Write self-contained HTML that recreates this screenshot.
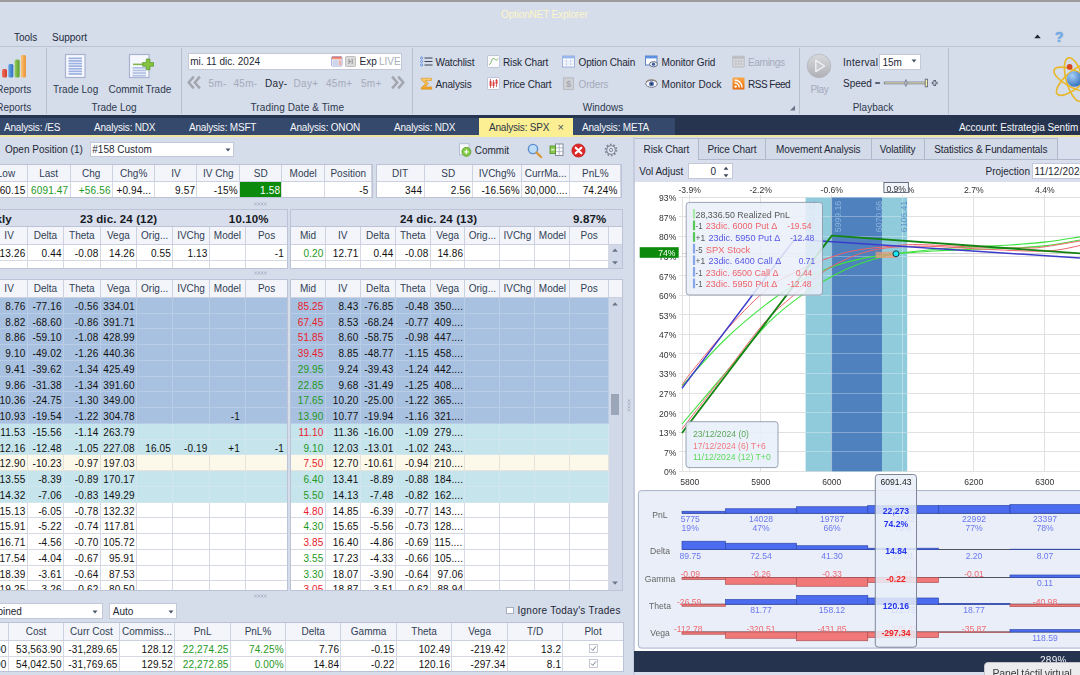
<!DOCTYPE html><html><head><meta charset="utf-8"><title>OptionNET Explorer</title><style>
*{box-sizing:border-box;margin:0;padding:0}
html,body{width:1080px;height:675px;overflow:hidden;background:#d5dcea;}
body{font-family:"Liberation Sans",sans-serif;font-size:10px;letter-spacing:0;color:#1e2b3c;position:relative}
.abs{position:absolute}
.t{position:absolute;white-space:nowrap;line-height:12px}
.grid{position:absolute;background:#fff;border:1px solid #bfc6d8;overflow:hidden}
.row{position:absolute;left:0;right:0;display:flex}
.c{height:100%;background:#fff;border-right:1px solid #d6d8e4;border-bottom:1px solid #d6d8e4;text-align:right;padding-right:1.3px;letter-spacing:.15px;white-space:nowrap;overflow:hidden;flex:none;color:#111}
.hd .c{background:#f3f5fa;text-align:center;padding:0;letter-spacing:0;color:#313e55;border-right:1px solid #ccd1df;border-bottom:1px solid #ccd1df}
.g{color:#1e981e}.r{color:#e8202c}
.blue .c{background:#a8c1e0;border-color:#b9cde6}
.cyan .c{background:#c5e4ec;border-color:#d2e6ee}
.cream .c{background:#fdf9ea;border-color:#e6e3dc}
.combo{position:absolute;background:#fff;border:1px solid #c3c9d8;}
svg text{letter-spacing:0}
.vsep{position:absolute;width:1px;background:#b8bfcf}
</style></head><body>
<div class="abs" style="left:0;top:0;width:1080px;height:2px;background:#9c9c9c"></div>
<div class="t" style="left:501px;top:8.7px;color:#fdf6c8;font-size:10px;letter-spacing:-.15px">OptionNET Explorer</div>
<div class="t" style="left:14px;top:32px">Tools</div>
<div class="t" style="left:52px;top:32px">Support</div>
<div class="abs" style="left:0;top:46px;width:1080px;height:1px;background:#bcc3d3"></div>
<div class="vsep" style="left:46px;top:48px;height:66px"></div>
<div class="vsep" style="left:181px;top:48px;height:66px"></div>
<div class="vsep" style="left:412px;top:48px;height:66px"></div>
<div class="vsep" style="left:799px;top:48px;height:66px"></div>
<div class="vsep" style="left:948px;top:48px;height:66px"></div>
<div class="t" style="left:-3.8px;top:101.6px;color:#2d3a4e">Reports</div>
<div class="t" style="left:54px;width:120px;text-align:center;top:101.6px;color:#2d3a4e">Trade Log</div>
<div class="t" style="left:237.3px;width:120px;text-align:center;top:101.6px;color:#2d3a4e"><span style="letter-spacing:.12px">Trading Date &amp; Time</span></div>
<div class="t" style="left:543px;width:120px;text-align:center;top:101.6px;color:#2d3a4e">Windows</div>
<div class="t" style="left:813px;width:120px;text-align:center;top:101.6px;color:#2d3a4e">Playback</div>
<svg class="abs" style="left:0;top:52px" width="30" height="28" viewBox="0 0 30 28"><defs><linearGradient id="gr" x1="0" x2="1"><stop offset="0" stop-color="#f07060"/><stop offset="1" stop-color="#d03828"/></linearGradient><linearGradient id="gb" x1="0" x2="1"><stop offset="0" stop-color="#6aa8e8"/><stop offset="1" stop-color="#2f6fc0"/></linearGradient><linearGradient id="gg" x1="0" x2="1"><stop offset="0" stop-color="#9ad060"/><stop offset="1" stop-color="#5a9a28"/></linearGradient><linearGradient id="go" x1="0" x2="1"><stop offset="0" stop-color="#fcc878"/><stop offset="1" stop-color="#e89030"/></linearGradient></defs><rect x="2" y="17" width="5" height="8.5" rx="1.5" fill="url(#gr)"/><rect x="8.3" y="12" width="5" height="13.5" rx="1.5" fill="url(#gb)"/><rect x="14.6" y="7.5" width="5" height="18" rx="1.5" fill="url(#gg)"/><rect x="20.9" y="3" width="5" height="22.5" rx="1.5" fill="url(#go)"/></svg>
<div class="t" style="left:-3.8px;top:83.8px;color:#2d3a4e">Reports</div>
<svg class="abs" style="left:64px;top:53px" width="24" height="27" viewBox="0 0 24 27"><rect x="1.5" y="1.5" width="19.5" height="23" fill="#f6f8fd" stroke="#aab2d2" stroke-width="1.2"/><rect x="4.5" y="4.5" width="13.5" height="1.7" fill="#9db2e2"/><rect x="4.5" y="7.1" width="13.5" height="1.7" fill="#9db2e2"/><rect x="4.5" y="9.7" width="13.5" height="1.7" fill="#9db2e2"/><rect x="4.5" y="12.3" width="13.5" height="1.7" fill="#9db2e2"/><rect x="4.5" y="14.9" width="13.5" height="1.7" fill="#9db2e2"/><rect x="4.5" y="17.5" width="13.5" height="1.7" fill="#9db2e2"/><rect x="4.5" y="20.1" width="13.5" height="1.7" fill="#9db2e2"/></svg>
<div class="t" style="left:53px;top:83.8px;color:#2d3a4e">Trade Log</div>
<svg class="abs" style="left:128px;top:53px" width="28" height="27" viewBox="0 0 28 27"><rect x="1.5" y="1.5" width="19.5" height="23" fill="#f6f8fd" stroke="#aab2d2" stroke-width="1.2"/><rect x="4.5" y="14.0" width="13.5" height="1.7" fill="#b2c0e4"/><rect x="4.5" y="16.6" width="13.5" height="1.7" fill="#b2c0e4"/><rect x="4.5" y="19.2" width="13.5" height="1.7" fill="#b2c0e4"/><rect x="4.5" y="21.8" width="13.5" height="1.7" fill="#b2c0e4"/><rect x="5" y="10.6" width="10" height="1.5" fill="#7db548"/><path d="M18.3 6h3.6v3.6h3.6v3.6h-3.6v3.6h-3.6v-3.6h-3.6v-3.6h3.6z" fill="#86c440" stroke="#5c9a28" stroke-width=".8"/></svg>
<div class="t" style="left:108.5px;top:83.8px;color:#2d3a4e">Commit Trade</div>
<div class="abs" style="left:188px;top:52.5px;width:213.5px;height:17px;background:#fff;border:1px solid #c3c9d8"></div>
<div class="t" style="left:190.2px;top:55.8px;color:#1e2836">mi. 11 dic. 2024</div>
<svg class="abs" style="left:331px;top:55.5px" width="12" height="11" viewBox="0 0 12 11"><defs><linearGradient id="cg" x1="0" y1="0" x2="0" y2="1"><stop offset="0" stop-color="#e86858"/><stop offset="1" stop-color="#f4a898"/></linearGradient></defs><rect x=".5" y=".5" width="10.6" height="9.6" rx="1" fill="#f4f6fc" stroke="#97a3cf" stroke-width=".8"/><path d="M.9 3.4V1.6q0-.8.8-.8h8.2q.8 0 .8.8v1.8z" fill="url(#cg)"/><rect x="1.6" y="4.2" width="6" height="5" fill="#cbd6ee"/><rect x="7.8" y="4.2" width="2.4" height="5" fill="#f0b0a8"/></svg>
<svg class="abs" style="left:345px;top:55.5px" width="11" height="11" viewBox="0 0 11 11"><rect x=".5" y=".5" width="10" height="10" rx=".8" fill="#dadada" stroke="#b6b6b8" stroke-width=".8"/><path d="M4 3v5M7.2 3v5M4 5.5h2" stroke="#8c8c8e" stroke-width=".9" fill="none"/></svg>
<div class="t" style="left:359.5px;top:55.8px;color:#1e2836">Exp</div>
<div class="t" style="left:379px;top:55.8px;color:#a8aebb">LIVE</div>
<svg class="abs" style="left:187px;top:75px" width="15" height="15" viewBox="0 0 14 14"><g fill="none" stroke="#a2a6ae" stroke-width="2.3"><path d="M6.3 1.5 1.6 7l4.7 5.5"/><path d="M12 1.5 7.3 7l4.7 5.5"/></g></svg>
<svg class="abs" style="left:389.5px;top:75px" width="15" height="15" viewBox="0 0 14 14"><g transform="translate(14,0) scale(-1,1)" fill="none" stroke="#a2a6ae" stroke-width="2.3"><path d="M6.3 1.5 1.6 7l4.7 5.5"/><path d="M12 1.5 7.3 7l4.7 5.5"/></g></svg>
<div class="t" style="left:208.5px;top:77.5px;letter-spacing:.3px;color:#a4abba">5m-</div>
<div class="t" style="left:233.5px;top:77.5px;letter-spacing:.3px;color:#a4abba">45m-</div>
<div class="t" style="left:265px;top:77.5px;letter-spacing:.3px;color:#1e2836">Day-</div>
<div class="t" style="left:293.5px;top:77.5px;letter-spacing:.3px;color:#a4abba">Day+</div>
<div class="t" style="left:326px;top:77.5px;letter-spacing:.3px;color:#a4abba">45m+</div>
<div class="t" style="left:361px;top:77.5px;letter-spacing:.3px;color:#a4abba">5m+</div>
<svg class="abs" style="left:420px;top:54.5px" width="13" height="13" viewBox="0 0 13 13"><g fill="none" stroke="#3c4454" stroke-width="1.2"><path d="M4.5 3h8M4.5 6.5h8M4.5 10h8"/></g><g fill="#fff" stroke="#4a80d8" stroke-width=".9"><circle cx="1.6" cy="3" r="1"/><circle cx="1.6" cy="6.5" r="1"/><circle cx="1.6" cy="10" r="1"/></g></svg>
<div class="t" style="left:435.5px;top:56.8px;letter-spacing:-0.15px;color:#1e2836">Watchlist</div>
<svg class="abs" style="left:420px;top:76.5px" width="13" height="13" viewBox="0 0 13 13"><defs><linearGradient id="sg" x1="0" y1="0" x2="0" y2="1"><stop offset="0" stop-color="#fcd070"/><stop offset="1" stop-color="#f0a020"/></linearGradient></defs><path d="M1.2 1.3h10.3v2.3H5.2l3.3 3-3.6 3.3h6.9v2.3H1.2v-1.5l4.4-4-4.4-3.9z" fill="url(#sg)" stroke="#d89020" stroke-width=".6" stroke-linejoin="round"/></svg>
<div class="t" style="left:435.5px;top:78.8px;letter-spacing:-0.15px;color:#1e2836">Analysis</div>
<svg class="abs" style="left:486.5px;top:54.5px" width="13" height="13" viewBox="0 0 13 13"><rect x=".5" y=".5" width="12" height="12" rx="1.2" fill="#fcfcfe" stroke="#b4bccf" stroke-width=".8"/><path d="M2 9.5c2.5 0 2.2-6 4.5-6s2 4 4.5 0" fill="none" stroke="#6cb058" stroke-width="1"/></svg>
<div class="t" style="left:503px;top:56.8px;letter-spacing:-0.15px;color:#1e2836">Risk Chart</div>
<svg class="abs" style="left:486.5px;top:76.5px" width="13" height="13" viewBox="0 0 13 13"><rect x=".5" y=".5" width="12" height="12" rx="1.2" fill="#fcfcfe" stroke="#b4bccf" stroke-width=".8"/><path d="M3.5 2v9M6.5 3v8M9.5 2v8" stroke="#c03030" stroke-width=".7"/><rect x="2.6" y="4" width="1.9" height="5" fill="#e04040"/><rect x="5.6" y="5" width="1.9" height="4" fill="#e04040"/><rect x="8.6" y="3" width="1.9" height="4" fill="#e04040"/></svg>
<div class="t" style="left:503px;top:78.8px;letter-spacing:-0.15px;color:#1e2836">Price Chart</div>
<svg class="abs" style="left:561.5px;top:54.5px" width="13" height="13" viewBox="0 0 13 13"><rect x=".5" y="1" width="12" height="11" fill="#fdfdff" stroke="#8aa4d8" stroke-width=".8"/><rect x=".5" y="1" width="12" height="2.4" fill="#98b6f0"/><path d="M.5 6.2h12M.5 9h12M4.5 3.6v8.4M8.5 3.6v8.4" stroke="#c2d0f0" stroke-width=".7"/></svg>
<div class="t" style="left:578.5px;top:56.8px;letter-spacing:-0.15px;color:#1e2836">Option Chain</div>
<svg class="abs" style="left:561.5px;top:76.5px" width="13" height="13" viewBox="0 0 13 13"><rect x="1.5" y=".8" width="10" height="11.6" fill="#cfd0d5" stroke="#b2b4ba" stroke-width=".8"/><text x="6.5" y="10" font-size="8.5" text-anchor="middle" fill="#a4a6ae" font-family="Liberation Sans" font-weight="bold">$</text></svg>
<div class="t" style="left:578.5px;top:78.8px;letter-spacing:-0.15px;color:#a4abba">Orders</div>
<svg class="abs" style="left:645px;top:54.5px" width="13" height="13" viewBox="0 0 13 13"><rect x=".5" y="1" width="11.5" height="9" fill="#fdfdff" stroke="#5078b8" stroke-width=".9"/><rect x=".5" y="1" width="11.5" height="2.4" fill="#5c90e0"/><ellipse cx="8.5" cy="9.2" rx="4" ry="2.6" fill="#eef2fa" stroke="#586078" stroke-width=".9"/><circle cx="8.5" cy="9.2" r="1.6" fill="#3c5ca0"/></svg>
<div class="t" style="left:661.5px;top:56.8px;letter-spacing:-0.1px;color:#1e2836">Monitor Grid</div>
<svg class="abs" style="left:645px;top:76.5px" width="13" height="13" viewBox="0 0 13 13"><ellipse cx="6.5" cy="6.8" rx="5.8" ry="3.5" fill="#f4f6fa" stroke="#6a6c78" stroke-width=".9"/><circle cx="6.5" cy="6.8" r="2.5" fill="#5878b8"/><circle cx="6.5" cy="6.8" r="1.1" fill="#202838"/><path d="M1 5c2-3 9-3 11 0" fill="none" stroke="#94806c" stroke-width="1"/></svg>
<div class="t" style="left:661.5px;top:78.8px;letter-spacing:0.1px;color:#1e2836">Monitor Dock</div>
<svg class="abs" style="left:731.5px;top:54.5px" width="13" height="13" viewBox="0 0 13 13"><rect x=".8" y="1.2" width="11.4" height="10.8" rx=".5" fill="#d6d7db" stroke="#b0b2b8" stroke-width=".8"/><rect x=".8" y="1.2" width="11.4" height="2.6" fill="#bcbec4"/><g fill="#b4b6bc"><rect x="3" y="5.5" width="1.6" height="1.4"/><rect x="5.7" y="5.5" width="1.6" height="1.4"/><rect x="8.4" y="5.5" width="1.6" height="1.4"/><rect x="3" y="8.3" width="1.6" height="1.4"/><rect x="5.7" y="8.3" width="1.6" height="1.4"/><rect x="8.4" y="8.3" width="1.6" height="1.4"/></g></svg>
<div class="t" style="left:748px;top:56.8px;letter-spacing:-0.35px;color:#a4abba">Earnings</div>
<svg class="abs" style="left:731.5px;top:76.5px" width="13" height="13" viewBox="0 0 13 13"><defs><linearGradient id="rs" x1="0" y1="0" x2="0" y2="1"><stop offset="0" stop-color="#fba848"/><stop offset="1" stop-color="#e86c10"/></linearGradient></defs><rect x=".5" y=".5" width="12" height="12" rx="1.1" fill="url(#rs)"/><circle cx="3.6" cy="9.6" r="1.2" fill="#fff"/><path d="M2.5 5.8a4.8 4.8 0 0 1 4.8 4.8M2.5 3a7.6 7.6 0 0 1 7.6 7.6" fill="none" stroke="#fff" stroke-width="1.4"/></svg>
<div class="t" style="left:748px;top:78.8px;letter-spacing:-0.5px;color:#1e2836">RSS Feed</div>
<svg class="abs" style="left:789px;top:105px" width="7" height="6" viewBox="0 0 7 6"><path d="M6 .5V5.5H1z" fill="#6a7488"/></svg>
<svg class="abs" style="left:806px;top:53px" width="26" height="26" viewBox="0 0 26 26"><defs><linearGradient id="pl" x1="0" y1="0" x2="0" y2="1"><stop offset="0" stop-color="#d8d9dc"/><stop offset="1" stop-color="#aeb0b6"/></linearGradient></defs><circle cx="13" cy="13" r="11.8" fill="url(#pl)" stroke="#b4b6bc" stroke-width=".8"/><path d="M9.8 7.4 18.6 13 9.8 18.6z" fill="#c6c8ce" stroke="#f1f1f4" stroke-width="1.4" stroke-linejoin="round"/></svg>
<div class="t" style="left:810.5px;top:84px;letter-spacing:-.4px;color:#a4abba">Play</div>
<div class="t" style="left:843px;top:56.8px;letter-spacing:.3px;color:#1e2836">Interval</div>
<div class="abs" style="left:878.5px;top:53.5px;width:42.5px;height:16px;background:#fff;border:1px solid #c3c9d8"></div>
<div class="t" style="left:882.5px;top:56.8px;color:#1e2836">15m</div>
<svg class="abs" style="left:911px;top:59px" width="6" height="4" viewBox="0 0 6 4"><path d="M.5.5h5L3 3.5z" fill="#4a5468"/></svg>
<div class="t" style="left:843px;top:77.6px;color:#1e2836">Speed</div>
<svg class="abs" style="left:873px;top:76px" width="68" height="14" viewBox="0 0 68 14"><rect x="2" y="6" width="5.2" height="1.9" rx=".9" fill="#5a6478"/><rect x="11.2" y="6" width="43" height="1.9" fill="#e6dfae" stroke="#69728a" stroke-width=".7"/><path d="M32.9 3.6l1.2 3.4-1.2 3.4-1.2-3.4z" fill="#dfe2ea" stroke="#5a6478" stroke-width=".7"/><rect x="52.2" y="3.2" width="2.4" height="7.6" fill="#fdf0a0" stroke="#5a6478" stroke-width=".8"/><path d="M58.8 7h5.8M61.7 4.1v5.8" stroke="#5a6478" stroke-width="2.5"/><path d="M59.8 7h3.8M61.7 5.1v3.8" stroke="#e8eaf0" stroke-width=".8"/></svg>
<svg class="abs" style="left:1033.5px;top:34px" width="7" height="5" viewBox="0 0 7 5"><path d="M3.5.5 6.8 4.2H.2z" fill="#1e2836"/></svg>
<div class="t" style="left:1055px;top:28.5px;color:#78aee8;font-size:14px;font-weight:bold;line-height:16px;text-shadow:0 0 1px #4a80c8">?</div>
<svg class="abs" style="left:1050px;top:54px" width="30" height="50" viewBox="0 0 30 50"><g fill="none" stroke="#e8b828" stroke-width="1.6"><ellipse cx="24.5" cy="25.5" rx="8.3" ry="22.5" transform="rotate(-16 24.5 25.5)"/><ellipse cx="24.5" cy="25.5" rx="8.3" ry="22.5" transform="rotate(50 24.5 25.5)"/><ellipse cx="24.5" cy="25.5" rx="8.3" ry="22.5" transform="rotate(-64 24.5 25.5)"/></g><defs><radialGradient id="sp" cx=".35" cy=".3" r=".8"><stop offset="0" stop-color="#a8d0f8"/><stop offset="1" stop-color="#2a68b8"/></radialGradient></defs><circle cx="24.5" cy="25" r="7.8" fill="url(#sp)"/><circle cx="19.6" cy="12.8" r="2.9" fill="#d84820"/></svg>
<div class="abs" style="left:0;top:115.3px;width:1080px;height:20.4px;background:#27344f"></div><div class="abs" style="left:0;top:117.8px;width:674.5px;height:17.9px;background:#34496b"></div>

<div class="abs" style="left:0;top:135.4px;width:1080px;height:1.6px;background:#efe49c"></div>
<div class="abs" style="left:478.8px;top:118px;width:94.4px;height:18.5px;background:#fcee92"></div>

<div class="t" style="left:4px;top:122px;letter-spacing:-.2px;color:#f4f6fa">Analysis: /ES</div>
<div class="t" style="left:94px;top:122px;letter-spacing:-.2px;color:#f4f6fa">Analysis: NDX</div>
<div class="t" style="left:189px;top:122px;letter-spacing:-.2px;color:#f4f6fa">Analysis: MSFT</div>
<div class="t" style="left:290px;top:122px;letter-spacing:-.2px;color:#f4f6fa">Analysis: ONON</div>
<div class="t" style="left:394px;top:122px;letter-spacing:-.2px;color:#f4f6fa">Analysis: NDX</div>
<div class="t" style="left:582px;top:122px;letter-spacing:-.2px;color:#f4f6fa">Analysis: META</div>
<div class="t" style="left:489px;top:122px;letter-spacing:-.2px;color:#2a3548">Analysis: SPX</div>
<div class="t" style="left:557.5px;top:121px;color:#4a5468;font-size:11px">×</div>
<div class="t" style="left:959px;top:122px;letter-spacing:-.05px;color:#f4f6fa">Account: Estrategia Sentim</div>
<div class="t" style="left:5px;top:144.1px;color:#1e2836">Open Position (1)</div>
<div class="combo" style="left:89.5px;top:142.1px;width:144.5px;height:15.4px"></div>
<div class="t" style="left:92.3px;top:144.1px;color:#1e2836">#158 Custom</div>
<svg class="abs" style="left:224.5px;top:148px" width="6" height="4" viewBox="0 0 6 4"><path d="M.5.5h5L3 3.5z" fill="#4a5468"/></svg>
<svg class="abs" style="left:458px;top:143px" width="14" height="14" viewBox="0 0 14 14"><rect x="1.5" y=".8" width="9.5" height="11" fill="#fdfdff" stroke="#aab4cc" stroke-width=".8"/><circle cx="8.4" cy="8.8" r="4.5" fill="#84c848" stroke="#58a028" stroke-width=".8"/><path d="M6.2 8.8h4.4M8.4 6.6v4.4" stroke="#f4fff0" stroke-width="1.3"/></svg>
<div class="t" style="left:474.7px;top:144.6px;color:#1e2836">Commit</div>
<svg class="abs" style="left:527px;top:142.5px" width="16" height="16" viewBox="0 0 16 16"><circle cx="6" cy="6" r="4.6" fill="#bcdcf8" stroke="#5a8cd0" stroke-width="1.4"/><path d="M9.5 9.5 14 14" stroke="#d89838" stroke-width="2.4" stroke-linecap="round"/></svg>
<svg class="abs" style="left:549px;top:143px" width="15" height="14" viewBox="0 0 15 14"><rect x="6.5" y="1" width="7.5" height="11.5" fill="#fdfdff" stroke="#7a8498" stroke-width=".9"/><path d="M10.2 1v11.5M6.5 4.8h7.5M6.5 8.6h7.5" stroke="#9aa4b8" stroke-width=".7"/><rect x="1" y="3" width="5.5" height="7.5" fill="#8cc850" stroke="#4a9020" stroke-width=".8"/><path d="M2.2 6.7h3.2" stroke="#fff" stroke-width="1.1"/></svg>
<svg class="abs" style="left:571px;top:142.5px" width="16" height="16" viewBox="0 0 16 16"><circle cx="7.5" cy="7.5" r="6.6" fill="#e02828" stroke="#b01010" stroke-width=".6"/><path d="M4.7 4.7l5.6 5.6M10.3 4.7l-5.6 5.6" stroke="#fff" stroke-width="2.2" stroke-linecap="round"/></svg>
<svg class="abs" style="left:604px;top:143px" width="14" height="14" viewBox="0 0 14 14"><circle cx="7" cy="7" r="4.3" fill="#e4e8f0" stroke="#7c8496" stroke-width="1.1"/><circle cx="7" cy="7" r="5.5" fill="none" stroke="#7c8496" stroke-width="1.6" stroke-dasharray="1.7 1.75"/><circle cx="7" cy="7" r="1.7" fill="#d5dcea" stroke="#7c8496" stroke-width=".9"/></svg>
<div class="grid" style="left:-15.80px;top:164.10px;width:388.30px;height:34.30px;background:#fff;border-color:#bcc3d6">
<div class="row hd" style="top:0.00px;height:17.40px;line-height:17.70px">
<div class="c" style="width:42.50px;">Low</div>
<div class="c" style="width:42.80px;">Last</div>
<div class="c" style="width:42.40px;">Chg</div>
<div class="c" style="width:42.60px;">Chg%</div>
<div class="c" style="width:42.00px;">IV</div>
<div class="c" style="width:42.50px;">IV Chg</div>
<div class="c" style="width:42.50px;">SD</div>
<div class="c" style="width:42.50px;">Model</div>
<div class="c" style="width:47.50px;">Position</div>
</div>
<div class="row " style="top:17.40px;height:15.90px;line-height:17.60px">
<div class="c" style="width:42.50px;">6060.15</div>
<div class="c" style="width:42.80px;color:#1e981e;">6091.47</div>
<div class="c" style="width:42.40px;color:#1e981e;">+56.56</div>
<div class="c" style="width:42.60px;text-align:left;padding-left:3.5px;">+0.94...</div>
<div class="c" style="width:42.00px;">9.57</div>
<div class="c" style="width:42.50px;">-15%</div>
<div class="c" style="width:42.50px;background:#0b8a0b;color:#fff;">1.58</div>
<div class="c" style="width:42.50px;"></div>
<div class="c" style="width:47.50px;padding-right:3px;">-5</div>
</div>
</div>
<div class="grid" style="left:375.50px;top:164.10px;width:246.00px;height:34.30px;background:#fff;border-color:#bcc3d6">
<div class="row hd" style="top:0.00px;height:17.40px;line-height:17.70px">
<div class="c" style="width:48.00px;">DIT</div>
<div class="c" style="width:48.60px;">SD</div>
<div class="c" style="width:48.90px;">IVChg%</div>
<div class="c" style="width:48.30px;">CurrMa...</div>
<div class="c" style="width:51.20px;">PnL%</div>
</div>
<div class="row " style="top:17.40px;height:15.90px;line-height:17.60px">
<div class="c" style="width:48.00px;">344</div>
<div class="c" style="width:48.60px;">2.56</div>
<div class="c" style="width:48.90px;">-16.56%</div>
<div class="c" style="width:48.30px;text-align:left;padding-left:2.5px;">30,000....</div>
<div class="c" style="width:51.20px;padding-right:3px;">74.24%</div>
</div>
</div>
<svg class="abs" style="left:253.7px;top:202px" width="13" height="4" viewBox="0 0 13 4"><path d="M.5.5l2.4 3M2.9.5.5 3.5M3.7.5l2.4 3M6.1.5 3.7 3.5M6.9.5l2.4 3M9.3.5 6.9 3.5M10.1.5l2.4 3M12.5.5 10.1 3.5" stroke="#a4abbe" stroke-width=".7" fill="none"/></svg>
<svg class="abs" style="left:253.7px;top:271.4px" width="13" height="4" viewBox="0 0 13 4"><path d="M.5.5l2.4 3M2.9.5.5 3.5M3.7.5l2.4 3M6.1.5 3.7 3.5M6.9.5l2.4 3M9.3.5 6.9 3.5M10.1.5l2.4 3M12.5.5 10.1 3.5" stroke="#a4abbe" stroke-width=".7" fill="none"/></svg>
<svg class="abs" style="left:253.7px;top:594px" width="13" height="4" viewBox="0 0 13 4"><path d="M.5.5l2.4 3M2.9.5.5 3.5M3.7.5l2.4 3M6.1.5 3.7 3.5M6.9.5l2.4 3M9.3.5 6.9 3.5M10.1.5l2.4 3M12.5.5 10.1 3.5" stroke="#a4abbe" stroke-width=".7" fill="none"/></svg>
<div class="abs" style="left:-5px;top:208.9px;width:293.1px;height:59.9px;background:#d8deeb;border:1px solid #bcc3d6"></div>
<div class="abs" style="left:290.1px;top:208.9px;width:332.8px;height:59.9px;background:#d8deeb;border:1px solid #bcc3d6"></div>
<div class="t" style="left:-4.6px;top:211.8px;font-weight:bold;font-size:11.5px;letter-spacing:.12px;color:#16191f;line-height:14px">kly</div>
<div class="t" style="left:68.5px;width:100px;text-align:center;top:211.8px;font-weight:bold;font-size:11.5px;letter-spacing:.12px;color:#16191f;line-height:14px">23 dic. 24 (12)</div>
<div class="t" style="left:168.6px;width:100px;text-align:right;top:211.8px;font-weight:bold;font-size:11.5px;letter-spacing:.12px;color:#16191f;line-height:14px">10.10%</div>
<div class="t" style="left:388.5px;width:100px;text-align:center;top:211.8px;font-weight:bold;font-size:11.5px;letter-spacing:.12px;color:#16191f;line-height:14px">24 dic. 24 (13)</div>
<div class="t" style="left:506.3px;width:100px;text-align:right;top:211.8px;font-weight:bold;font-size:11.5px;letter-spacing:.12px;color:#16191f;line-height:14px">9.87%</div>
<div class="grid" style="left:-9.50px;top:226.20px;width:297.60px;height:42.60px;background:#fff;border-color:#bcc3d6">
<div class="row hd" style="top:0.00px;height:17.70px;line-height:18.00px">
<div class="c" style="width:36.20px;">IV</div>
<div class="c" style="width:36.30px;">Delta</div>
<div class="c" style="width:36.70px;">Theta</div>
<div class="c" style="width:36.40px;">Vega</div>
<div class="c" style="width:36.20px;">Orig...</div>
<div class="c" style="width:36.60px;">IVChg</div>
<div class="c" style="width:36.20px;">Model</div>
<div class="c" style="width:42.00px;">Pos</div>
</div>
<div class="row " style="top:17.70px;height:16.20px;line-height:17.90px">
<div class="c" style="width:36.20px;">13.26</div>
<div class="c" style="width:36.30px;">0.44</div>
<div class="c" style="width:36.70px;">-0.08</div>
<div class="c" style="width:36.40px;">14.26</div>
<div class="c" style="width:36.20px;">0.55</div>
<div class="c" style="width:36.60px;">1.13</div>
<div class="c" style="width:36.20px;"></div>
<div class="c" style="width:42.00px;padding-right:3px;">-1</div>
</div>
<div class="row " style="top:33.90px;height:7.70px;line-height:9.40px">
<div class="c" style="width:36.20px;"></div>
<div class="c" style="width:36.30px;"></div>
<div class="c" style="width:36.70px;"></div>
<div class="c" style="width:36.40px;"></div>
<div class="c" style="width:36.20px;"></div>
<div class="c" style="width:36.60px;"></div>
<div class="c" style="width:36.20px;"></div>
<div class="c" style="width:42.00px;padding-right:3px;"></div>
</div>
</div>
<div class="grid" style="left:290.10px;top:226.20px;width:332.80px;height:42.60px;background:#d1d8e7;border-color:#bcc3d6">
<div class="row hd" style="top:0.00px;height:17.70px;line-height:18.00px">
<div class="c" style="width:34.70px;">Mid</div>
<div class="c" style="width:35.00px;">IV</div>
<div class="c" style="width:35.00px;">Delta</div>
<div class="c" style="width:35.00px;">Theta</div>
<div class="c" style="width:34.70px;">Vega</div>
<div class="c" style="width:34.80px;">Orig...</div>
<div class="c" style="width:35.20px;">IVChg</div>
<div class="c" style="width:35.00px;">Model</div>
<div class="c" style="width:38.30px;">Pos</div>
<div class="c" style="width:0.00px;width:13.7px;border-right:none"></div>
</div>
<div class="row " style="top:17.70px;height:16.20px;line-height:17.90px">
<div class="c" style="width:34.70px;color:#1e981e;">0.20</div>
<div class="c" style="width:35.00px;">12.71</div>
<div class="c" style="width:35.00px;">0.44</div>
<div class="c" style="width:35.00px;">-0.08</div>
<div class="c" style="width:34.70px;">14.86</div>
<div class="c" style="width:34.80px;"></div>
<div class="c" style="width:35.20px;"></div>
<div class="c" style="width:35.00px;"></div>
<div class="c" style="width:38.30px;"></div>
</div>
<div class="row " style="top:33.90px;height:7.70px;line-height:9.40px">
<div class="c" style="width:34.70px;"></div>
<div class="c" style="width:35.00px;"></div>
<div class="c" style="width:35.00px;"></div>
<div class="c" style="width:35.00px;"></div>
<div class="c" style="width:34.70px;"></div>
<div class="c" style="width:34.80px;"></div>
<div class="c" style="width:35.20px;"></div>
<div class="c" style="width:35.00px;"></div>
<div class="c" style="width:38.30px;"></div>
</div>
</div>
<svg class="abs" style="left:611px;top:247px" width="8" height="19" viewBox="0 0 8 19"><path d="M4 1.5 6.8 4.8H1.2zM4 17.5 6.8 14.2H1.2z" fill="#6a7488"/></svg>
<div class="grid" style="left:-9.50px;top:278.90px;width:297.60px;height:311.90px;background:#fff;border-color:#bcc3d6">
<div class="row hd" style="top:0.00px;height:17.95px;line-height:18.25px">
<div class="c" style="width:36.20px;">IV</div>
<div class="c" style="width:36.30px;">Delta</div>
<div class="c" style="width:36.70px;">Theta</div>
<div class="c" style="width:36.40px;">Vega</div>
<div class="c" style="width:36.20px;">Orig...</div>
<div class="c" style="width:36.60px;">IVChg</div>
<div class="c" style="width:36.20px;">Model</div>
<div class="c" style="width:42.00px;">Pos</div>
</div>
<div class="row blue" style="top:17.95px;height:15.75px;line-height:17.45px">
<div class="c" style="width:36.20px;">8.76</div>
<div class="c" style="width:36.30px;">-77.16</div>
<div class="c" style="width:36.70px;">-0.56</div>
<div class="c" style="width:36.40px;">334.01</div>
<div class="c" style="width:36.20px;"></div>
<div class="c" style="width:36.60px;"></div>
<div class="c" style="width:36.20px;"></div>
<div class="c" style="width:42.00px;padding-right:3px;"></div>
</div>
<div class="row blue" style="top:33.70px;height:15.75px;line-height:17.45px">
<div class="c" style="width:36.20px;">8.82</div>
<div class="c" style="width:36.30px;">-68.60</div>
<div class="c" style="width:36.70px;">-0.86</div>
<div class="c" style="width:36.40px;">391.71</div>
<div class="c" style="width:36.20px;"></div>
<div class="c" style="width:36.60px;"></div>
<div class="c" style="width:36.20px;"></div>
<div class="c" style="width:42.00px;padding-right:3px;"></div>
</div>
<div class="row blue" style="top:49.45px;height:15.75px;line-height:17.45px">
<div class="c" style="width:36.20px;">8.86</div>
<div class="c" style="width:36.30px;">-59.10</div>
<div class="c" style="width:36.70px;">-1.08</div>
<div class="c" style="width:36.40px;">428.99</div>
<div class="c" style="width:36.20px;"></div>
<div class="c" style="width:36.60px;"></div>
<div class="c" style="width:36.20px;"></div>
<div class="c" style="width:42.00px;padding-right:3px;"></div>
</div>
<div class="row blue" style="top:65.20px;height:15.75px;line-height:17.45px">
<div class="c" style="width:36.20px;">9.10</div>
<div class="c" style="width:36.30px;">-49.02</div>
<div class="c" style="width:36.70px;">-1.26</div>
<div class="c" style="width:36.40px;">440.36</div>
<div class="c" style="width:36.20px;"></div>
<div class="c" style="width:36.60px;"></div>
<div class="c" style="width:36.20px;"></div>
<div class="c" style="width:42.00px;padding-right:3px;"></div>
</div>
<div class="row blue" style="top:80.95px;height:15.75px;line-height:17.45px">
<div class="c" style="width:36.20px;">9.41</div>
<div class="c" style="width:36.30px;">-39.62</div>
<div class="c" style="width:36.70px;">-1.34</div>
<div class="c" style="width:36.40px;">425.49</div>
<div class="c" style="width:36.20px;"></div>
<div class="c" style="width:36.60px;"></div>
<div class="c" style="width:36.20px;"></div>
<div class="c" style="width:42.00px;padding-right:3px;"></div>
</div>
<div class="row blue" style="top:96.70px;height:15.75px;line-height:17.45px">
<div class="c" style="width:36.20px;">9.86</div>
<div class="c" style="width:36.30px;">-31.38</div>
<div class="c" style="width:36.70px;">-1.34</div>
<div class="c" style="width:36.40px;">391.60</div>
<div class="c" style="width:36.20px;"></div>
<div class="c" style="width:36.60px;"></div>
<div class="c" style="width:36.20px;"></div>
<div class="c" style="width:42.00px;padding-right:3px;"></div>
</div>
<div class="row blue" style="top:112.45px;height:15.75px;line-height:17.45px">
<div class="c" style="width:36.20px;">10.36</div>
<div class="c" style="width:36.30px;">-24.75</div>
<div class="c" style="width:36.70px;">-1.30</div>
<div class="c" style="width:36.40px;">349.00</div>
<div class="c" style="width:36.20px;"></div>
<div class="c" style="width:36.60px;"></div>
<div class="c" style="width:36.20px;"></div>
<div class="c" style="width:42.00px;padding-right:3px;"></div>
</div>
<div class="row blue" style="top:128.20px;height:15.75px;line-height:17.45px">
<div class="c" style="width:36.20px;">10.93</div>
<div class="c" style="width:36.30px;">-19.54</div>
<div class="c" style="width:36.70px;">-1.22</div>
<div class="c" style="width:36.40px;">304.78</div>
<div class="c" style="width:36.20px;"></div>
<div class="c" style="width:36.60px;"></div>
<div class="c" style="width:36.20px;padding-right:5px;">-1</div>
<div class="c" style="width:42.00px;padding-right:3px;"></div>
</div>
<div class="row cyan" style="top:143.95px;height:15.75px;line-height:17.45px">
<div class="c" style="width:36.20px;">11.53</div>
<div class="c" style="width:36.30px;">-15.56</div>
<div class="c" style="width:36.70px;">-1.14</div>
<div class="c" style="width:36.40px;">263.79</div>
<div class="c" style="width:36.20px;"></div>
<div class="c" style="width:36.60px;"></div>
<div class="c" style="width:36.20px;"></div>
<div class="c" style="width:42.00px;padding-right:3px;"></div>
</div>
<div class="row cyan" style="top:159.70px;height:15.75px;line-height:17.45px">
<div class="c" style="width:36.20px;">12.16</div>
<div class="c" style="width:36.30px;">-12.48</div>
<div class="c" style="width:36.70px;">-1.05</div>
<div class="c" style="width:36.40px;">227.08</div>
<div class="c" style="width:36.20px;">16.05</div>
<div class="c" style="width:36.60px;">-0.19</div>
<div class="c" style="width:36.20px;padding-right:5px;">+1</div>
<div class="c" style="width:42.00px;padding-right:3px;">-1</div>
</div>
<div class="row cream" style="top:175.45px;height:15.75px;line-height:17.45px">
<div class="c" style="width:36.20px;">12.90</div>
<div class="c" style="width:36.30px;">-10.23</div>
<div class="c" style="width:36.70px;">-0.97</div>
<div class="c" style="width:36.40px;">197.03</div>
<div class="c" style="width:36.20px;"></div>
<div class="c" style="width:36.60px;"></div>
<div class="c" style="width:36.20px;"></div>
<div class="c" style="width:42.00px;padding-right:3px;"></div>
</div>
<div class="row cyan" style="top:191.20px;height:15.75px;line-height:17.45px">
<div class="c" style="width:36.20px;">13.55</div>
<div class="c" style="width:36.30px;">-8.39</div>
<div class="c" style="width:36.70px;">-0.89</div>
<div class="c" style="width:36.40px;">170.17</div>
<div class="c" style="width:36.20px;"></div>
<div class="c" style="width:36.60px;"></div>
<div class="c" style="width:36.20px;"></div>
<div class="c" style="width:42.00px;padding-right:3px;"></div>
</div>
<div class="row cyan" style="top:206.95px;height:15.75px;line-height:17.45px">
<div class="c" style="width:36.20px;">14.32</div>
<div class="c" style="width:36.30px;">-7.06</div>
<div class="c" style="width:36.70px;">-0.83</div>
<div class="c" style="width:36.40px;">149.29</div>
<div class="c" style="width:36.20px;"></div>
<div class="c" style="width:36.60px;"></div>
<div class="c" style="width:36.20px;"></div>
<div class="c" style="width:42.00px;padding-right:3px;"></div>
</div>
<div class="row " style="top:222.70px;height:15.75px;line-height:17.45px">
<div class="c" style="width:36.20px;">15.13</div>
<div class="c" style="width:36.30px;">-6.05</div>
<div class="c" style="width:36.70px;">-0.78</div>
<div class="c" style="width:36.40px;">132.32</div>
<div class="c" style="width:36.20px;"></div>
<div class="c" style="width:36.60px;"></div>
<div class="c" style="width:36.20px;"></div>
<div class="c" style="width:42.00px;padding-right:3px;"></div>
</div>
<div class="row " style="top:238.45px;height:15.75px;line-height:17.45px">
<div class="c" style="width:36.20px;">15.91</div>
<div class="c" style="width:36.30px;">-5.22</div>
<div class="c" style="width:36.70px;">-0.74</div>
<div class="c" style="width:36.40px;">117.81</div>
<div class="c" style="width:36.20px;"></div>
<div class="c" style="width:36.60px;"></div>
<div class="c" style="width:36.20px;"></div>
<div class="c" style="width:42.00px;padding-right:3px;"></div>
</div>
<div class="row " style="top:254.20px;height:15.75px;line-height:17.45px">
<div class="c" style="width:36.20px;">16.71</div>
<div class="c" style="width:36.30px;">-4.56</div>
<div class="c" style="width:36.70px;">-0.70</div>
<div class="c" style="width:36.40px;">105.72</div>
<div class="c" style="width:36.20px;"></div>
<div class="c" style="width:36.60px;"></div>
<div class="c" style="width:36.20px;"></div>
<div class="c" style="width:42.00px;padding-right:3px;"></div>
</div>
<div class="row " style="top:269.95px;height:15.75px;line-height:17.45px">
<div class="c" style="width:36.20px;">17.54</div>
<div class="c" style="width:36.30px;">-4.04</div>
<div class="c" style="width:36.70px;">-0.67</div>
<div class="c" style="width:36.40px;">95.91</div>
<div class="c" style="width:36.20px;"></div>
<div class="c" style="width:36.60px;"></div>
<div class="c" style="width:36.20px;"></div>
<div class="c" style="width:42.00px;padding-right:3px;"></div>
</div>
<div class="row " style="top:285.70px;height:15.75px;line-height:17.45px">
<div class="c" style="width:36.20px;">18.39</div>
<div class="c" style="width:36.30px;">-3.61</div>
<div class="c" style="width:36.70px;">-0.64</div>
<div class="c" style="width:36.40px;">87.53</div>
<div class="c" style="width:36.20px;"></div>
<div class="c" style="width:36.60px;"></div>
<div class="c" style="width:36.20px;"></div>
<div class="c" style="width:42.00px;padding-right:3px;"></div>
</div>
<div class="row " style="top:301.45px;height:9.45px;line-height:17.45px">
<div class="c" style="width:36.20px;">19.25</div>
<div class="c" style="width:36.30px;">-3.26</div>
<div class="c" style="width:36.70px;">-0.62</div>
<div class="c" style="width:36.40px;">80.50</div>
<div class="c" style="width:36.20px;"></div>
<div class="c" style="width:36.60px;"></div>
<div class="c" style="width:36.20px;"></div>
<div class="c" style="width:42.00px;padding-right:3px;"></div>
</div>
</div>
<div class="grid" style="left:290.10px;top:278.90px;width:332.80px;height:311.90px;background:#d1d8e7;border-color:#bcc3d6">
<div class="row hd" style="top:0.00px;height:17.95px;line-height:18.25px">
<div class="c" style="width:34.70px;">Mid</div>
<div class="c" style="width:35.00px;">IV</div>
<div class="c" style="width:35.00px;">Delta</div>
<div class="c" style="width:35.00px;">Theta</div>
<div class="c" style="width:34.70px;">Vega</div>
<div class="c" style="width:34.80px;">Orig...</div>
<div class="c" style="width:35.20px;">IVChg</div>
<div class="c" style="width:35.00px;">Model</div>
<div class="c" style="width:38.30px;">Pos</div>
<div class="c" style="width:0.00px;width:13.7px;border-right:none"></div>
</div>
<div class="row blue" style="top:17.95px;height:15.75px;line-height:17.45px">
<div class="c" style="width:34.70px;color:#e8202c;">85.25</div>
<div class="c" style="width:35.00px;">8.43</div>
<div class="c" style="width:35.00px;">-76.85</div>
<div class="c" style="width:35.00px;">-0.48</div>
<div class="c" style="width:34.70px;text-align:left;padding-left:3.5px;">350....</div>
<div class="c" style="width:34.80px;"></div>
<div class="c" style="width:35.20px;"></div>
<div class="c" style="width:35.00px;"></div>
<div class="c" style="width:38.30px;"></div>
</div>
<div class="row blue" style="top:33.70px;height:15.75px;line-height:17.45px">
<div class="c" style="width:34.70px;color:#e8202c;">67.45</div>
<div class="c" style="width:35.00px;">8.53</div>
<div class="c" style="width:35.00px;">-68.24</div>
<div class="c" style="width:35.00px;">-0.77</div>
<div class="c" style="width:34.70px;text-align:left;padding-left:3.5px;">409....</div>
<div class="c" style="width:34.80px;"></div>
<div class="c" style="width:35.20px;"></div>
<div class="c" style="width:35.00px;"></div>
<div class="c" style="width:38.30px;"></div>
</div>
<div class="row blue" style="top:49.45px;height:15.75px;line-height:17.45px">
<div class="c" style="width:34.70px;color:#e8202c;">51.85</div>
<div class="c" style="width:35.00px;">8.60</div>
<div class="c" style="width:35.00px;">-58.75</div>
<div class="c" style="width:35.00px;">-0.98</div>
<div class="c" style="width:34.70px;text-align:left;padding-left:3.5px;">447....</div>
<div class="c" style="width:34.80px;"></div>
<div class="c" style="width:35.20px;"></div>
<div class="c" style="width:35.00px;"></div>
<div class="c" style="width:38.30px;"></div>
</div>
<div class="row blue" style="top:65.20px;height:15.75px;line-height:17.45px">
<div class="c" style="width:34.70px;color:#e8202c;">39.45</div>
<div class="c" style="width:35.00px;">8.85</div>
<div class="c" style="width:35.00px;">-48.77</div>
<div class="c" style="width:35.00px;">-1.15</div>
<div class="c" style="width:34.70px;text-align:left;padding-left:3.5px;">458....</div>
<div class="c" style="width:34.80px;"></div>
<div class="c" style="width:35.20px;"></div>
<div class="c" style="width:35.00px;"></div>
<div class="c" style="width:38.30px;"></div>
</div>
<div class="row blue" style="top:80.95px;height:15.75px;line-height:17.45px">
<div class="c" style="width:34.70px;color:#1e981e;">29.95</div>
<div class="c" style="width:35.00px;">9.24</div>
<div class="c" style="width:35.00px;">-39.43</div>
<div class="c" style="width:35.00px;">-1.24</div>
<div class="c" style="width:34.70px;text-align:left;padding-left:3.5px;">442....</div>
<div class="c" style="width:34.80px;"></div>
<div class="c" style="width:35.20px;"></div>
<div class="c" style="width:35.00px;"></div>
<div class="c" style="width:38.30px;"></div>
</div>
<div class="row blue" style="top:96.70px;height:15.75px;line-height:17.45px">
<div class="c" style="width:34.70px;color:#1e981e;">22.85</div>
<div class="c" style="width:35.00px;">9.68</div>
<div class="c" style="width:35.00px;">-31.49</div>
<div class="c" style="width:35.00px;">-1.25</div>
<div class="c" style="width:34.70px;text-align:left;padding-left:3.5px;">408....</div>
<div class="c" style="width:34.80px;"></div>
<div class="c" style="width:35.20px;"></div>
<div class="c" style="width:35.00px;"></div>
<div class="c" style="width:38.30px;"></div>
</div>
<div class="row blue" style="top:112.45px;height:15.75px;line-height:17.45px">
<div class="c" style="width:34.70px;color:#1e981e;">17.65</div>
<div class="c" style="width:35.00px;">10.20</div>
<div class="c" style="width:35.00px;">-25.00</div>
<div class="c" style="width:35.00px;">-1.22</div>
<div class="c" style="width:34.70px;text-align:left;padding-left:3.5px;">365....</div>
<div class="c" style="width:34.80px;"></div>
<div class="c" style="width:35.20px;"></div>
<div class="c" style="width:35.00px;"></div>
<div class="c" style="width:38.30px;"></div>
</div>
<div class="row blue" style="top:128.20px;height:15.75px;line-height:17.45px">
<div class="c" style="width:34.70px;color:#1e981e;">13.90</div>
<div class="c" style="width:35.00px;">10.77</div>
<div class="c" style="width:35.00px;">-19.94</div>
<div class="c" style="width:35.00px;">-1.16</div>
<div class="c" style="width:34.70px;text-align:left;padding-left:3.5px;">321....</div>
<div class="c" style="width:34.80px;"></div>
<div class="c" style="width:35.20px;"></div>
<div class="c" style="width:35.00px;"></div>
<div class="c" style="width:38.30px;"></div>
</div>
<div class="row cyan" style="top:143.95px;height:15.75px;line-height:17.45px">
<div class="c" style="width:34.70px;color:#e8202c;">11.10</div>
<div class="c" style="width:35.00px;">11.36</div>
<div class="c" style="width:35.00px;">-16.00</div>
<div class="c" style="width:35.00px;">-1.09</div>
<div class="c" style="width:34.70px;text-align:left;padding-left:3.5px;">279....</div>
<div class="c" style="width:34.80px;"></div>
<div class="c" style="width:35.20px;"></div>
<div class="c" style="width:35.00px;"></div>
<div class="c" style="width:38.30px;"></div>
</div>
<div class="row cyan" style="top:159.70px;height:15.75px;line-height:17.45px">
<div class="c" style="width:34.70px;color:#1e981e;">9.10</div>
<div class="c" style="width:35.00px;">12.03</div>
<div class="c" style="width:35.00px;">-13.01</div>
<div class="c" style="width:35.00px;">-1.02</div>
<div class="c" style="width:34.70px;text-align:left;padding-left:3.5px;">243....</div>
<div class="c" style="width:34.80px;"></div>
<div class="c" style="width:35.20px;"></div>
<div class="c" style="width:35.00px;"></div>
<div class="c" style="width:38.30px;"></div>
</div>
<div class="row cream" style="top:175.45px;height:15.75px;line-height:17.45px">
<div class="c" style="width:34.70px;color:#e8202c;">7.50</div>
<div class="c" style="width:35.00px;">12.70</div>
<div class="c" style="width:35.00px;">-10.61</div>
<div class="c" style="width:35.00px;">-0.94</div>
<div class="c" style="width:34.70px;text-align:left;padding-left:3.5px;">210....</div>
<div class="c" style="width:34.80px;"></div>
<div class="c" style="width:35.20px;"></div>
<div class="c" style="width:35.00px;"></div>
<div class="c" style="width:38.30px;"></div>
</div>
<div class="row cyan" style="top:191.20px;height:15.75px;line-height:17.45px">
<div class="c" style="width:34.70px;color:#1e981e;">6.40</div>
<div class="c" style="width:35.00px;">13.41</div>
<div class="c" style="width:35.00px;">-8.89</div>
<div class="c" style="width:35.00px;">-0.88</div>
<div class="c" style="width:34.70px;text-align:left;padding-left:3.5px;">184....</div>
<div class="c" style="width:34.80px;"></div>
<div class="c" style="width:35.20px;"></div>
<div class="c" style="width:35.00px;"></div>
<div class="c" style="width:38.30px;"></div>
</div>
<div class="row cyan" style="top:206.95px;height:15.75px;line-height:17.45px">
<div class="c" style="width:34.70px;color:#1e981e;">5.50</div>
<div class="c" style="width:35.00px;">14.13</div>
<div class="c" style="width:35.00px;">-7.48</div>
<div class="c" style="width:35.00px;">-0.82</div>
<div class="c" style="width:34.70px;text-align:left;padding-left:3.5px;">162....</div>
<div class="c" style="width:34.80px;"></div>
<div class="c" style="width:35.20px;"></div>
<div class="c" style="width:35.00px;"></div>
<div class="c" style="width:38.30px;"></div>
</div>
<div class="row " style="top:222.70px;height:15.75px;line-height:17.45px">
<div class="c" style="width:34.70px;color:#e8202c;">4.80</div>
<div class="c" style="width:35.00px;">14.85</div>
<div class="c" style="width:35.00px;">-6.39</div>
<div class="c" style="width:35.00px;">-0.77</div>
<div class="c" style="width:34.70px;text-align:left;padding-left:3.5px;">143....</div>
<div class="c" style="width:34.80px;"></div>
<div class="c" style="width:35.20px;"></div>
<div class="c" style="width:35.00px;"></div>
<div class="c" style="width:38.30px;"></div>
</div>
<div class="row " style="top:238.45px;height:15.75px;line-height:17.45px">
<div class="c" style="width:34.70px;color:#1e981e;">4.30</div>
<div class="c" style="width:35.00px;">15.65</div>
<div class="c" style="width:35.00px;">-5.56</div>
<div class="c" style="width:35.00px;">-0.73</div>
<div class="c" style="width:34.70px;text-align:left;padding-left:3.5px;">128....</div>
<div class="c" style="width:34.80px;"></div>
<div class="c" style="width:35.20px;"></div>
<div class="c" style="width:35.00px;"></div>
<div class="c" style="width:38.30px;"></div>
</div>
<div class="row " style="top:254.20px;height:15.75px;line-height:17.45px">
<div class="c" style="width:34.70px;color:#e8202c;">3.85</div>
<div class="c" style="width:35.00px;">16.40</div>
<div class="c" style="width:35.00px;">-4.86</div>
<div class="c" style="width:35.00px;">-0.69</div>
<div class="c" style="width:34.70px;text-align:left;padding-left:3.5px;">115....</div>
<div class="c" style="width:34.80px;"></div>
<div class="c" style="width:35.20px;"></div>
<div class="c" style="width:35.00px;"></div>
<div class="c" style="width:38.30px;"></div>
</div>
<div class="row " style="top:269.95px;height:15.75px;line-height:17.45px">
<div class="c" style="width:34.70px;color:#1e981e;">3.55</div>
<div class="c" style="width:35.00px;">17.23</div>
<div class="c" style="width:35.00px;">-4.33</div>
<div class="c" style="width:35.00px;">-0.66</div>
<div class="c" style="width:34.70px;text-align:left;padding-left:3.5px;">105....</div>
<div class="c" style="width:34.80px;"></div>
<div class="c" style="width:35.20px;"></div>
<div class="c" style="width:35.00px;"></div>
<div class="c" style="width:38.30px;"></div>
</div>
<div class="row " style="top:285.70px;height:15.75px;line-height:17.45px">
<div class="c" style="width:34.70px;color:#1e981e;">3.30</div>
<div class="c" style="width:35.00px;">18.07</div>
<div class="c" style="width:35.00px;">-3.90</div>
<div class="c" style="width:35.00px;">-0.64</div>
<div class="c" style="width:34.70px;">97.06</div>
<div class="c" style="width:34.80px;"></div>
<div class="c" style="width:35.20px;"></div>
<div class="c" style="width:35.00px;"></div>
<div class="c" style="width:38.30px;"></div>
</div>
<div class="row " style="top:301.45px;height:9.45px;line-height:17.45px">
<div class="c" style="width:34.70px;color:#e8202c;">3.05</div>
<div class="c" style="width:35.00px;">18.87</div>
<div class="c" style="width:35.00px;">-3.51</div>
<div class="c" style="width:35.00px;">-0.62</div>
<div class="c" style="width:34.70px;">88.94</div>
<div class="c" style="width:34.80px;"></div>
<div class="c" style="width:35.20px;"></div>
<div class="c" style="width:35.00px;"></div>
<div class="c" style="width:38.30px;"></div>
</div>
</div>
<div class="abs" style="left:610.5px;top:393.9px;width:8.8px;height:21px;background:#9ba7b9"></div>
<svg class="abs" style="left:611px;top:301px" width="8" height="6" viewBox="0 0 8 6"><path d="M4 1.2 6.8 4.5H1.2z" fill="#6a7488"/></svg>
<svg class="abs" style="left:611px;top:580px" width="8" height="6" viewBox="0 0 8 6"><path d="M4 4.8 6.8 1.5H1.2z" fill="#6a7488"/></svg>
<svg class="abs" style="left:626.7px;top:399.4px" width="4" height="13" viewBox="0 0 4 13"><path d="M.5.5l3 2.4M.5 2.9l3-2.4M.5 3.7l3 2.4M.5 6.1l3-2.4M.5 6.9l3 2.4M.5 9.3l3-2.4M.5 10.1l3 2.4M.5 12.5l3-2.4" stroke="#a4abbe" stroke-width=".7" fill="none"/></svg>
<div class="combo" style="left:-10px;top:603.1px;width:112.7px;height:16.3px"></div>
<div class="t" style="left:-2.6px;top:606.4px;color:#1e2836">bined</div>
<svg class="abs" style="left:92.3px;top:609.5px" width="6" height="4" viewBox="0 0 6 4"><path d="M.5.5h5L3 3.5z" fill="#4a5468"/></svg>
<div class="combo" style="left:109.3px;top:603.1px;width:68px;height:16.3px"></div>
<div class="t" style="left:112.8px;top:606.4px;color:#1e2836">Auto</div>
<svg class="abs" style="left:167.5px;top:609.5px" width="6" height="4" viewBox="0 0 6 4"><path d="M.5.5h5L3 3.5z" fill="#4a5468"/></svg>
<div class="abs" style="left:505.8px;top:606.7px;width:7.8px;height:7.8px;background:#fff;border:1px solid #a8aec0"></div>
<div class="t" style="left:517.5px;top:605.4px;letter-spacing:.25px;color:#1e2836">Ignore Today's Trades</div>
<div class="grid" style="left:-20.50px;top:622.20px;width:644.30px;height:50.20px;background:#fff;border-color:#bcc3d6">
<div class="row hd" style="top:0.00px;height:17.50px;line-height:17.80px">
<div class="c" style="width:28.30px;"></div>
<div class="c" style="width:55.30px;">Cost</div>
<div class="c" style="width:55.80px;">Curr Cost</div>
<div class="c" style="width:55.40px;">Commiss...</div>
<div class="c" style="width:55.60px;">PnL</div>
<div class="c" style="width:55.20px;">PnL%</div>
<div class="c" style="width:55.40px;">Delta</div>
<div class="c" style="width:55.30px;">Gamma</div>
<div class="c" style="width:55.70px;">Theta</div>
<div class="c" style="width:55.30px;">Vega</div>
<div class="c" style="width:55.70px;">T/D</div>
<div class="c" style="width:60.30px;">Plot</div>
</div>
<div class="row " style="top:17.50px;height:16.50px;line-height:18.20px">
<div class="c" style="width:28.30px;">00</div>
<div class="c" style="width:55.30px;">53,563.90</div>
<div class="c" style="width:55.80px;">-31,289.65</div>
<div class="c" style="width:55.40px;">128.12</div>
<div class="c" style="width:55.60px;color:#1e981e;">22,274.25</div>
<div class="c" style="width:55.20px;color:#1e981e;">74.25%</div>
<div class="c" style="width:55.40px;">7.76</div>
<div class="c" style="width:55.30px;">-0.15</div>
<div class="c" style="width:55.70px;">102.49</div>
<div class="c" style="width:55.30px;">-219.42</div>
<div class="c" style="width:55.70px;">13.2</div>
<div class="c" style="width:60.30px;text-align:center;padding:0;"><svg width="9" height="9" viewBox="0 0 9 9" style="vertical-align:0px"><rect x=".5" y=".5" width="8" height="8" fill="#fff" stroke="#b4bac8" stroke-width=".8"/><path d="M2 4.5 3.8 6.4 7 2.3" fill="none" stroke="#7a8498" stroke-width="1"/></svg></div>
</div>
<div class="row " style="top:34.00px;height:15.20px;line-height:16.90px">
<div class="c" style="width:28.30px;">00</div>
<div class="c" style="width:55.30px;">54,042.50</div>
<div class="c" style="width:55.80px;">-31,769.65</div>
<div class="c" style="width:55.40px;">129.52</div>
<div class="c" style="width:55.60px;color:#1e981e;">22,272.85</div>
<div class="c" style="width:55.20px;color:#1e981e;">0.00%</div>
<div class="c" style="width:55.40px;">14.84</div>
<div class="c" style="width:55.30px;">-0.22</div>
<div class="c" style="width:55.70px;">120.16</div>
<div class="c" style="width:55.30px;">-297.34</div>
<div class="c" style="width:55.70px;">8.1</div>
<div class="c" style="width:60.30px;text-align:center;padding:0;"><svg width="9" height="9" viewBox="0 0 9 9" style="vertical-align:0px"><rect x=".5" y=".5" width="8" height="8" fill="#fff" stroke="#b4bac8" stroke-width=".8"/><path d="M2 4.5 3.8 6.4 7 2.3" fill="none" stroke="#7a8498" stroke-width="1"/></svg></div>
</div>
</div>
<div class="abs" style="left:633px;top:137px;width:447px;height:538px;background:#d9dfec;border-left:2px solid #c5ccdd"></div>
<div class="abs" style="left:634.5px;top:138.4px;width:423.5px;height:22px;background:#d3dae8;border-top:1px solid #b0b8cc;border-bottom:1px solid #b0b8cc"></div>
<div class="abs" style="left:1057.5px;top:159.4px;width:23px;height:1px;background:#b0b8cc"></div>
<div class="abs" style="left:634.5px;top:139.4px;width:63.8px;height:21.6px;background:#d9dfec"></div>
<div class="abs" style="left:697.8px;top:138.4px;width:1px;height:21.5px;background:#b0b8cc"></div>
<div class="t" style="left:634.5px;width:63.799999999999955px;text-align:center;top:144.4px;letter-spacing:-.1px;color:#1e2836">Risk Chart</div>
<div class="abs" style="left:765.0px;top:138.4px;width:1px;height:21.5px;background:#b0b8cc"></div>
<div class="t" style="left:698.3px;width:67.20000000000005px;text-align:center;top:144.4px;letter-spacing:-.1px;color:#1e2836">Price Chart</div>
<div class="abs" style="left:870.5px;top:138.4px;width:1px;height:21.5px;background:#b0b8cc"></div>
<div class="t" style="left:765.5px;width:105.5px;text-align:center;top:144.4px;letter-spacing:-.1px;color:#1e2836">Movement Analysis</div>
<div class="abs" style="left:923.5px;top:138.4px;width:1px;height:21.5px;background:#b0b8cc"></div>
<div class="t" style="left:871px;width:53px;text-align:center;top:144.4px;letter-spacing:-.1px;color:#1e2836">Volatility</div>
<div class="abs" style="left:1057.0px;top:138.4px;width:1px;height:21.5px;background:#b0b8cc"></div>
<div class="t" style="left:924px;width:133.5px;text-align:center;top:144.4px;letter-spacing:-.1px;color:#1e2836">Statistics &amp; Fundamentals</div>
<div class="t" style="left:639.3px;top:165.5px;color:#1e2836">Vol Adjust</div>
<div class="combo" style="left:687.8px;top:162.8px;width:44.9px;height:16.6px"></div>
<div class="t" style="left:710.5px;top:165.5px;color:#1e2836">0</div>
<svg class="abs" style="left:722.5px;top:165.5px" width="6" height="12" viewBox="0 0 6 12"><path d="M3 .8 5.4 3.8H.6zM3 11.2 5.4 8.2H.6z" fill="#3a4458"/></svg>
<div class="t" style="left:985.5px;top:165.5px;color:#1e2836">Projection</div>
<div class="combo" style="left:1032px;top:162.8px;width:60px;height:16.6px"></div>
<div class="t" style="left:1034.5px;top:165.5px;letter-spacing:.15px;color:#1e2836">11/12/2024</div>
<div class="abs" style="left:635px;top:181.6px;width:445px;height:307px;background:#fff"></div>
<svg class="abs" style="left:0;top:0;pointer-events:none;will-change:transform" width="1080" height="675" viewBox="0 0 1080 675" font-family="Liberation Sans, sans-serif">
<path d="M679 197.5H1080" stroke="#e1e1e1" stroke-width="1"/>
<path d="M679 216.5H1080" stroke="#e1e1e1" stroke-width="1"/>
<path d="M679 236.5H1080" stroke="#e1e1e1" stroke-width="1"/>
<path d="M679 256.5H1080" stroke="#e1e1e1" stroke-width="1"/>
<path d="M679 275.5H1080" stroke="#e1e1e1" stroke-width="1"/>
<path d="M679 295.5H1080" stroke="#e1e1e1" stroke-width="1"/>
<path d="M679 314.5H1080" stroke="#e1e1e1" stroke-width="1"/>
<path d="M679 334.5H1080" stroke="#e1e1e1" stroke-width="1"/>
<path d="M679 353.5H1080" stroke="#e1e1e1" stroke-width="1"/>
<path d="M679 373.5H1080" stroke="#e1e1e1" stroke-width="1"/>
<path d="M679 393.5H1080" stroke="#e1e1e1" stroke-width="1"/>
<path d="M679 412.5H1080" stroke="#e1e1e1" stroke-width="1"/>
<path d="M679 432.5H1080" stroke="#e1e1e1" stroke-width="1"/>
<path d="M679 451.5H1080" stroke="#e1e1e1" stroke-width="1"/>
<path d="M679 471.5H1080" stroke="#e1e1e1" stroke-width="1"/>
<path d="M682.5 197.3V471.3" stroke="#e1e1e1" stroke-width="1"/>
<path d="M689.5 194.8V471.3" stroke="#e1e1e1" stroke-width="1"/>
<path d="M760.5 194.8V471.3" stroke="#e1e1e1" stroke-width="1"/>
<path d="M831.5 194.8V471.3" stroke="#e1e1e1" stroke-width="1"/>
<path d="M902.5 194.8V471.3" stroke="#e1e1e1" stroke-width="1"/>
<path d="M973.5 194.8V471.3" stroke="#e1e1e1" stroke-width="1"/>
<path d="M1044.5 194.8V471.3" stroke="#e1e1e1" stroke-width="1"/>
<path d="M682 253.5H1080" stroke="#d6d6d6" stroke-width="1"/>
<rect x="805.6" y="197.3" width="101.6" height="274.0" fill="#90cbdc"/>
<rect x="832" y="197.3" width="50" height="274.0" fill="#4e81bd"/>
<path d="M805.6 197.5H907.2" stroke="#fff" stroke-opacity=".3" stroke-width="1"/>
<path d="M805.6 216.5H907.2" stroke="#fff" stroke-opacity=".3" stroke-width="1"/>
<path d="M805.6 236.5H907.2" stroke="#fff" stroke-opacity=".3" stroke-width="1"/>
<path d="M805.6 256.5H907.2" stroke="#fff" stroke-opacity=".3" stroke-width="1"/>
<path d="M805.6 275.5H907.2" stroke="#fff" stroke-opacity=".3" stroke-width="1"/>
<path d="M805.6 295.5H907.2" stroke="#fff" stroke-opacity=".3" stroke-width="1"/>
<path d="M805.6 314.5H907.2" stroke="#fff" stroke-opacity=".3" stroke-width="1"/>
<path d="M805.6 334.5H907.2" stroke="#fff" stroke-opacity=".3" stroke-width="1"/>
<path d="M805.6 353.5H907.2" stroke="#fff" stroke-opacity=".3" stroke-width="1"/>
<path d="M805.6 373.5H907.2" stroke="#fff" stroke-opacity=".3" stroke-width="1"/>
<path d="M805.6 393.5H907.2" stroke="#fff" stroke-opacity=".3" stroke-width="1"/>
<path d="M805.6 412.5H907.2" stroke="#fff" stroke-opacity=".3" stroke-width="1"/>
<path d="M805.6 432.5H907.2" stroke="#fff" stroke-opacity=".3" stroke-width="1"/>
<path d="M805.6 451.5H907.2" stroke="#fff" stroke-opacity=".3" stroke-width="1"/>
<path d="M831.6 197.3V471.3" stroke="#a9b9d8" stroke-opacity=".9" stroke-width="1"/>
<path d="M902.5 197.3V471.3" stroke="#fff" stroke-opacity=".35" stroke-width="1"/>
<text transform="translate(814.8 232.2) rotate(-90)" font-size="9.8" fill="#6fa8cf" textLength="31.4" lengthAdjust="spacingAndGlyphs">5963.41</text>
<text transform="translate(840.8 232.2) rotate(-90)" font-size="9.8" fill="#8db6de" textLength="31.4" lengthAdjust="spacingAndGlyphs">5999.16</text>
<text transform="translate(881.6 232.2) rotate(-90)" font-size="9.8" fill="#8db4de" textLength="31.4" lengthAdjust="spacingAndGlyphs">6070.66</text>
<text transform="translate(906.5 232.2) rotate(-90)" font-size="9.8" fill="#5e92c8" textLength="31.4" lengthAdjust="spacingAndGlyphs">6106.41</text>
<text x="676.3" y="201.2" font-size="8.6" text-anchor="end" fill="#333">93%</text>
<text x="676.3" y="220.8" font-size="8.6" text-anchor="end" fill="#333">87%</text>
<text x="676.3" y="240.4" font-size="8.6" text-anchor="end" fill="#333">80%</text>
<text x="676.3" y="260.0" font-size="8.6" text-anchor="end" fill="#333">73%</text>
<text x="676.3" y="279.6" font-size="8.6" text-anchor="end" fill="#333">67%</text>
<text x="676.3" y="299.1" font-size="8.6" text-anchor="end" fill="#333">60%</text>
<text x="676.3" y="318.7" font-size="8.6" text-anchor="end" fill="#333">53%</text>
<text x="676.3" y="338.3" font-size="8.6" text-anchor="end" fill="#333">47%</text>
<text x="676.3" y="357.8" font-size="8.6" text-anchor="end" fill="#333">40%</text>
<text x="676.3" y="377.4" font-size="8.6" text-anchor="end" fill="#333">33%</text>
<text x="676.3" y="397.0" font-size="8.6" text-anchor="end" fill="#333">27%</text>
<text x="676.3" y="416.6" font-size="8.6" text-anchor="end" fill="#333">20%</text>
<text x="676.3" y="436.1" font-size="8.6" text-anchor="end" fill="#333">13%</text>
<text x="676.3" y="455.7" font-size="8.6" text-anchor="end" fill="#333">7%</text>
<text x="676.3" y="475.3" font-size="8.6" text-anchor="end" fill="#333">0%</text>
<text x="689.7" y="192.9" font-size="8.6" text-anchor="middle" fill="#333">-3.9%</text>
<text x="760.7" y="192.9" font-size="8.6" text-anchor="middle" fill="#333">-2.2%</text>
<text x="831.8" y="192.9" font-size="8.6" text-anchor="middle" fill="#333">-0.6%</text>
<text x="973.8" y="192.9" font-size="8.6" text-anchor="middle" fill="#333">2.7%</text>
<text x="1044.8" y="192.9" font-size="8.6" text-anchor="middle" fill="#333">4.4%</text>
<text x="910.5" y="192.9" font-size="8.6" text-anchor="middle" fill="#333">%</text>
<rect x="883.9" y="182.5" width="24.5" height="10" fill="#f1f4fa" stroke="#5a6478" stroke-width=".9"/>
<text x="896.2" y="192" font-size="8.6" text-anchor="middle" fill="#333">0.9%</text>
<text x="689.8" y="484.5" font-size="8.6" text-anchor="middle" fill="#333">5800</text>
<text x="760.8" y="484.5" font-size="8.6" text-anchor="middle" fill="#333">5900</text>
<text x="831.8" y="484.5" font-size="8.6" text-anchor="middle" fill="#333">6000</text>
<text x="973.8" y="484.5" font-size="8.6" text-anchor="middle" fill="#333">6200</text>
<text x="1044.8" y="484.5" font-size="8.6" text-anchor="middle" fill="#333">6300</text>
<path d="M682.0 386.0 C689.1 378.3 709.9 354.0 724.4 340.0 C738.9 326.0 755.6 312.4 768.9 302.2 C782.2 292.0 793.3 285.0 804.4 278.9 C815.5 272.8 826.7 268.8 835.6 265.6 C844.5 262.4 850.4 261.3 857.8 259.6 C865.2 257.9 873.6 256.6 880.0 255.6 C886.4 254.6 886.7 254.6 896.0 253.6 C905.3 252.6 922.8 250.4 935.6 249.3 C948.4 248.2 960.3 247.6 972.6 246.9 C984.9 246.2 997.2 245.8 1009.6 245.0 C1022.0 244.2 1035.0 243.2 1046.7 241.9 C1058.4 240.6 1074.5 237.7 1080.0 236.9" fill="none" stroke="#3fe23f" stroke-width="1.1"/>
<path d="M682.0 424.0 C689.6 415.0 713.3 387.0 727.8 370.0 C742.3 353.0 756.1 335.0 768.9 322.2 C781.7 309.4 793.3 301.3 804.4 293.3 C815.5 285.3 826.7 279.2 835.6 274.4 C844.5 269.6 850.4 267.2 857.8 264.4 C865.2 261.6 873.6 259.2 880.0 257.5 C886.4 255.8 886.8 255.0 896.0 253.9 C905.2 252.8 922.3 251.8 935.0 251.0 C947.7 250.2 959.7 249.8 972.0 249.3 C984.3 248.9 996.5 248.9 1009.0 248.3 C1021.5 247.7 1034.9 247.0 1046.7 245.6 C1058.5 244.2 1074.5 240.9 1080.0 240.0" fill="none" stroke="#3fe23f" stroke-width="1.1"/>
<path d="M682.0 385.0 C683.8 382.5 685.0 379.8 693.0 370.0 C701.0 360.2 717.4 339.7 730.0 326.0 C742.6 312.3 756.5 297.5 768.9 287.8 C781.3 278.1 793.3 273.2 804.4 267.8 C815.5 262.4 826.7 258.6 835.6 255.6 C844.5 252.6 848.6 251.6 857.8 250.0 C867.0 248.4 881.1 247.1 891.0 246.2 C900.9 245.3 903.4 244.5 917.0 244.6 C930.6 244.7 954.1 246.3 972.6 246.9 C991.1 247.5 1015.6 248.1 1028.0 248.0 C1040.3 247.9 1038.0 247.7 1046.7 246.5 C1055.4 245.3 1074.5 241.9 1080.0 241.0" fill="none" stroke="#f0626a" stroke-width="1.0"/>
<path d="M682.0 429.0 C689.6 419.2 714.0 387.8 727.8 370.0 C741.6 352.2 754.1 334.4 765.0 322.0 C775.9 309.6 783.8 303.8 793.3 295.6 C802.8 287.4 815.0 278.2 822.0 273.0 C829.0 267.8 829.6 267.5 835.6 264.4 C841.6 261.3 850.4 257.0 857.8 254.4 C865.2 251.8 872.6 250.2 880.0 248.9 C887.4 247.6 892.8 247.1 902.0 246.7 C911.2 246.3 920.3 246.0 935.0 246.5 C949.7 247.0 971.4 248.8 990.0 249.5 C1008.6 250.2 1031.7 251.7 1046.7 251.0 C1061.7 250.3 1074.5 246.5 1080.0 245.6" fill="none" stroke="#f0626a" stroke-width="1.0"/>
<path d="M682.0 388.3 L794.6 239.2 L1080.0 258.0" fill="none" stroke="#3c3ccc" stroke-width="1.45" stroke-opacity="1" stroke-linejoin="round"/>
<path d="M682.0 433.0 L831.8 235.6 L1080.0 253.4" fill="none" stroke="#128412" stroke-width="1.8" stroke-opacity="1" stroke-linejoin="round"/>
<rect x="875.6" y="251.8" width="21" height="6.2" fill="#e89a78" fill-opacity=".75"/>
<circle cx="896" cy="253.8" r="3" fill="#19e8f0" stroke="#1a3a50" stroke-width="1"/>
<rect x="639.7" y="247.2" width="39" height="10.6" fill="#0b8a0b"/>
<text x="675.5" y="256" font-size="8.6" text-anchor="end" fill="#fff">74%</text>
<rect x="686.2" y="202.4" width="136.3" height="92.6" rx="3" fill="#e9eff9" fill-opacity=".87" stroke="#909aae" stroke-width=".9"/>
<rect x="692.9" y="209.0" width="2.2" height="9.6" fill="#a8e8a8"/>
<rect x="692.9" y="220.6" width="2.2" height="9.6" fill="#56c856"/>
<rect x="692.9" y="232.2" width="2.2" height="9.6" fill="#56c856"/>
<rect x="692.9" y="243.8" width="2.2" height="9.6" fill="#88a6e8"/>
<rect x="692.9" y="255.4" width="2.2" height="9.6" fill="#88a6e8"/>
<rect x="692.9" y="267.0" width="2.2" height="9.6" fill="#88a6e8"/>
<rect x="692.9" y="278.6" width="2.2" height="9.6" fill="#88a6e8"/>
<text x="695.6" y="217.7" font-size="9.9" fill="#585858" textLength="94.3" lengthAdjust="spacingAndGlyphs">28,336.50 Realized PnL</text>
<text x="695.6" y="229.3" font-size="9.9" fill="#585858" textLength="6.9" lengthAdjust="spacingAndGlyphs">-1</text>
<text x="705.8" y="229.3" font-size="9.9" fill="#f0646a" textLength="71.5" lengthAdjust="spacingAndGlyphs">23dic. 6000 Put Δ</text>
<text x="811.4" y="229.3" font-size="9.9" fill="#f0646a" text-anchor="end" textLength="24.1" lengthAdjust="spacingAndGlyphs">-19.54</text>
<text x="695.6" y="240.9" font-size="9.9" fill="#585858" textLength="9.6" lengthAdjust="spacingAndGlyphs">+1</text>
<text x="708.4" y="240.9" font-size="9.9" fill="#5858e6" textLength="71.9" lengthAdjust="spacingAndGlyphs">23dic. 5950 Put Δ</text>
<text x="814.4" y="240.9" font-size="9.9" fill="#5858e6" text-anchor="end" textLength="24.5" lengthAdjust="spacingAndGlyphs">-12.48</text>
<text x="695.6" y="252.5" font-size="9.9" fill="#585858" textLength="6.9" lengthAdjust="spacingAndGlyphs">-5</text>
<text x="705.8" y="252.5" font-size="9.9" fill="#f0646a" textLength="44.4" lengthAdjust="spacingAndGlyphs">SPX Stock</text>
<text x="695.6" y="264.1" font-size="9.9" fill="#585858" textLength="9.6" lengthAdjust="spacingAndGlyphs">+1</text>
<text x="708.4" y="264.1" font-size="9.9" fill="#5858e6" textLength="72.9" lengthAdjust="spacingAndGlyphs">23dic. 6400 Call Δ</text>
<text x="815.1" y="264.1" font-size="9.9" fill="#5858e6" text-anchor="end" textLength="16.3" lengthAdjust="spacingAndGlyphs">0.71</text>
<text x="695.6" y="275.7" font-size="9.9" fill="#585858" textLength="6.9" lengthAdjust="spacingAndGlyphs">-1</text>
<text x="705.8" y="275.7" font-size="9.9" fill="#f0646a" textLength="72.6" lengthAdjust="spacingAndGlyphs">23dic. 6500 Call Δ</text>
<text x="812.1" y="275.7" font-size="9.9" fill="#f0646a" text-anchor="end" textLength="16" lengthAdjust="spacingAndGlyphs">0.44</text>
<text x="695.6" y="287.3" font-size="9.9" fill="#585858" textLength="6.9" lengthAdjust="spacingAndGlyphs">-1</text>
<text x="705.8" y="287.3" font-size="9.9" fill="#f0646a" textLength="71.5" lengthAdjust="spacingAndGlyphs">23dic. 5950 Put Δ</text>
<text x="811.4" y="287.3" font-size="9.9" fill="#f0646a" text-anchor="end" textLength="24.1" lengthAdjust="spacingAndGlyphs">-12.48</text>
<rect x="686" y="421.7" width="92" height="45.9" rx="3" fill="#e9eff9" fill-opacity=".9" stroke="#8e98ac" stroke-width=".9"/>
<text x="692.9" y="436.7" font-size="9.1" fill="#5aa65a" textLength="56.1" lengthAdjust="spacingAndGlyphs">23/12/2024 (0)</text>
<text x="692.9" y="448.5" font-size="9.1" fill="#f0787e" textLength="72.8" lengthAdjust="spacingAndGlyphs">17/12/2024 (6) T+6</text>
<text x="692.9" y="459.9" font-size="9.1" fill="#5cdc5c" textLength="77.8" lengthAdjust="spacingAndGlyphs">11/12/2024 (12) T+0</text>
<rect x="635" y="488.6" width="445" height="162.6" fill="#fff"/>
<rect x="638.4" y="490.6" width="450" height="157.5" rx="3" fill="#e9eef8" stroke="#a6b2c8" stroke-width="1"/>
<path d="M682 513.25H1080" stroke="#4e5262" stroke-width="1"/>
<rect x="682" y="511.25" width="43.5" height="2" fill="#4c6cf0" stroke="#3048b0" stroke-width=".7"/>
<rect x="725.5" y="508.75" width="71.0" height="4.5" fill="#4c6cf0" stroke="#3048b0" stroke-width=".7"/>
<rect x="796.5" y="506.75" width="71.25" height="6.5" fill="#4c6cf0" stroke="#3048b0" stroke-width=".7"/>
<rect x="867.75" y="505.65" width="70.75" height="7.6" fill="#4c6cf0" stroke="#3048b0" stroke-width=".7"/>
<rect x="938.5" y="505.45" width="71.5" height="7.8" fill="#4c6cf0" stroke="#3048b0" stroke-width=".7"/>
<rect x="1010" y="504.65" width="72" height="8.6" fill="#4c6cf0" stroke="#3048b0" stroke-width=".7"/>
<text x="690.2" y="522.2" font-size="8.6" text-anchor="middle" fill="#6a78f0">5775</text>
<text x="690.2" y="530.9" font-size="8.6" text-anchor="middle" fill="#6a78f0">19%</text>
<text x="761" y="522.2" font-size="8.6" text-anchor="middle" fill="#6a78f0">14028</text>
<text x="761" y="530.9" font-size="8.6" text-anchor="middle" fill="#6a78f0">47%</text>
<text x="832" y="522.2" font-size="8.6" text-anchor="middle" fill="#6a78f0">19787</text>
<text x="832" y="530.9" font-size="8.6" text-anchor="middle" fill="#6a78f0">66%</text>
<text x="903" y="522.2" font-size="8.6" text-anchor="middle" fill="#6a78f0">22542</text>
<text x="903" y="530.9" font-size="8.6" text-anchor="middle" fill="#6a78f0">75%</text>
<text x="974" y="522.2" font-size="8.6" text-anchor="middle" fill="#6a78f0">22992</text>
<text x="974" y="530.9" font-size="8.6" text-anchor="middle" fill="#6a78f0">77%</text>
<text x="1045" y="522.2" font-size="8.6" text-anchor="middle" fill="#6a78f0">23397</text>
<text x="1045" y="530.9" font-size="8.6" text-anchor="middle" fill="#6a78f0">78%</text>
<text x="660" y="518" font-size="8.6" text-anchor="middle" fill="#666">PnL</text>
<path d="M682 549.5H1080" stroke="#4e5262" stroke-width="1"/>
<rect x="682" y="541.25" width="43.5" height="8.25" fill="#4c6cf0" stroke="#3048b0" stroke-width=".7"/>
<rect x="725.5" y="543.25" width="71.0" height="6.25" fill="#4c6cf0" stroke="#3048b0" stroke-width=".7"/>
<rect x="796.5" y="545.75" width="71.25" height="3.75" fill="#4c6cf0" stroke="#3048b0" stroke-width=".7"/>
<rect x="867.75" y="548.2" width="70.75" height="1.3" fill="#4c6cf0" stroke="#3048b0" stroke-width=".7"/>
<rect x="1010" y="549.2" width="72" height="0.3" fill="#4c6cf0" stroke="#3048b0" stroke-width=".7"/>
<text x="690.2" y="559.2" font-size="8.6" text-anchor="middle" fill="#6a78f0">89.75</text>
<text x="761" y="559.2" font-size="8.6" text-anchor="middle" fill="#6a78f0">72.54</text>
<text x="832" y="559.2" font-size="8.6" text-anchor="middle" fill="#6a78f0">41.30</text>
<text x="903" y="559.2" font-size="8.6" text-anchor="middle" fill="#6a78f0">15.01</text>
<text x="974" y="559.2" font-size="8.6" text-anchor="middle" fill="#6a78f0">2.20</text>
<text x="1045" y="559.2" font-size="8.6" text-anchor="middle" fill="#6a78f0">8.07</text>
<text x="660" y="554.2" font-size="8.6" text-anchor="middle" fill="#666">Delta</text>
<path d="M682 577.5H1080" stroke="#4e5262" stroke-width="1"/>
<rect x="682" y="577.5" width="43.5" height="2" fill="#f07878" stroke="#b05050" stroke-width=".7"/>
<rect x="725.5" y="577.5" width="71.0" height="6.75" fill="#f07878" stroke="#b05050" stroke-width=".7"/>
<rect x="796.5" y="577.5" width="71.25" height="8.75" fill="#f07878" stroke="#b05050" stroke-width=".7"/>
<rect x="867.75" y="577.5" width="70.75" height="5" fill="#f07878" stroke="#b05050" stroke-width=".7"/>
<rect x="1010" y="575.0" width="72" height="2.5" fill="#4c6cf0" stroke="#3048b0" stroke-width=".7"/>
<text x="690.2" y="577.2" font-size="8.6" text-anchor="middle" fill="#f06a70">-0.09</text>
<text x="761" y="577.2" font-size="8.6" text-anchor="middle" fill="#f06a70">-0.26</text>
<text x="832" y="577.2" font-size="8.6" text-anchor="middle" fill="#f06a70">-0.33</text>
<text x="903" y="577.2" font-size="8.6" text-anchor="middle" fill="#f06a70">-0.21</text>
<text x="974" y="577.2" font-size="8.6" text-anchor="middle" fill="#f06a70">-0.01</text>
<text x="1045" y="586" font-size="8.6" text-anchor="middle" fill="#6a78f0">0.11</text>
<text x="660" y="581.5" font-size="8.6" text-anchor="middle" fill="#666">Gamma</text>
<path d="M682 604.25H1080" stroke="#4e5262" stroke-width="1"/>
<rect x="682" y="604.25" width="43.5" height="2" fill="#f07878" stroke="#b05050" stroke-width=".7"/>
<rect x="725.5" y="599.5" width="71.0" height="4.75" fill="#4c6cf0" stroke="#3048b0" stroke-width=".7"/>
<rect x="796.5" y="595.5" width="71.25" height="8.75" fill="#4c6cf0" stroke="#3048b0" stroke-width=".7"/>
<rect x="867.75" y="598.0" width="70.75" height="6.25" fill="#4c6cf0" stroke="#3048b0" stroke-width=".7"/>
<rect x="938.5" y="603.45" width="71.5" height="0.8" fill="#4c6cf0" stroke="#3048b0" stroke-width=".7"/>
<rect x="1010" y="604.25" width="72" height="2.4" fill="#f07878" stroke="#b05050" stroke-width=".7"/>
<text x="689.2" y="604.7" font-size="8.6" text-anchor="middle" fill="#f06a70">-26.59</text>
<text x="761" y="613" font-size="8.6" text-anchor="middle" fill="#6a78f0">81.77</text>
<text x="832" y="613" font-size="8.6" text-anchor="middle" fill="#6a78f0">158.12</text>
<text x="903" y="613" font-size="8.6" text-anchor="middle" fill="#6a78f0">112.75</text>
<text x="974" y="613" font-size="8.6" text-anchor="middle" fill="#6a78f0">18.77</text>
<text x="1045" y="604.7" font-size="8.6" text-anchor="middle" fill="#f06a70">-40.98</text>
<text x="660" y="609" font-size="8.6" text-anchor="middle" fill="#666">Theta</text>
<path d="M682 632H1080" stroke="#4e5262" stroke-width="1"/>
<rect x="682" y="632" width="43.5" height="2.25" fill="#f07878" stroke="#b05050" stroke-width=".7"/>
<rect x="725.5" y="632" width="71.0" height="6.25" fill="#f07878" stroke="#b05050" stroke-width=".7"/>
<rect x="796.5" y="632" width="71.25" height="8.75" fill="#f07878" stroke="#b05050" stroke-width=".7"/>
<rect x="867.75" y="632" width="70.75" height="5.5" fill="#f07878" stroke="#b05050" stroke-width=".7"/>
<rect x="938.5" y="632" width="71.5" height="0.3" fill="#f07878" stroke="#b05050" stroke-width=".7"/>
<rect x="1010" y="629.6" width="72" height="2.4" fill="#4c6cf0" stroke="#3048b0" stroke-width=".7"/>
<text x="688.2" y="632.2" font-size="8.6" text-anchor="middle" fill="#f06a70">-112.78</text>
<text x="761" y="632.2" font-size="8.6" text-anchor="middle" fill="#f06a70">-320.51</text>
<text x="832" y="632.2" font-size="8.6" text-anchor="middle" fill="#f06a70">-431.85</text>
<text x="903" y="632.2" font-size="8.6" text-anchor="middle" fill="#f06a70">-275.43</text>
<text x="974" y="632.2" font-size="8.6" text-anchor="middle" fill="#f06a70">-35.87</text>
<text x="1045" y="641" font-size="8.6" text-anchor="middle" fill="#6a78f0">118.59</text>
<text x="660" y="636" font-size="8.6" text-anchor="middle" fill="#666">Vega</text>
<rect x="875.3" y="474.5" width="41.2" height="172.7" rx="3" fill="#e9eef8" fill-opacity=".85" stroke="#7d8799" stroke-width="1"/>
<text x="896" y="484.6" font-size="8.6" text-anchor="middle" fill="#222">6091.43</text>
<text x="896" y="513.8" font-size="8.6" font-weight="bold" text-anchor="middle" fill="#2233ee" letter-spacing="-.3">22,273</text>
<text x="896" y="526.7" font-size="8.6" font-weight="bold" text-anchor="middle" fill="#2233ee" letter-spacing="-.3">74.2%</text>
<text x="896" y="553.8" font-size="8.6" font-weight="bold" text-anchor="middle" fill="#2233ee" letter-spacing="-.3">14.84</text>
<text x="896" y="581.7" font-size="8.6" font-weight="bold" text-anchor="middle" fill="#ee2222" letter-spacing="-.3">-0.22</text>
<text x="896" y="608.8" font-size="8.6" font-weight="bold" text-anchor="middle" fill="#2233ee" letter-spacing="-.3">120.16</text>
<text x="896" y="635.9" font-size="8.6" font-weight="bold" text-anchor="middle" fill="#ee2222" letter-spacing="-.3">-297.34</text>
</svg>
<div class="abs" style="left:634px;top:651px;width:446px;height:21px;background:#26334e"></div>
<div class="t" style="left:1040px;top:655px;color:#f4f6fa;letter-spacing:.3px">289%</div>
<div class="abs" style="left:984px;top:661.5px;width:110px;height:20px;background:#ececef;border:1px solid #c4c4ca;border-radius:4px"></div>
<div class="t" style="left:992.5px;top:666.8px;color:#3a3a3a;font-size:10.5px;letter-spacing:-.15px">Panel táctil virtual</div>
</body></html>
